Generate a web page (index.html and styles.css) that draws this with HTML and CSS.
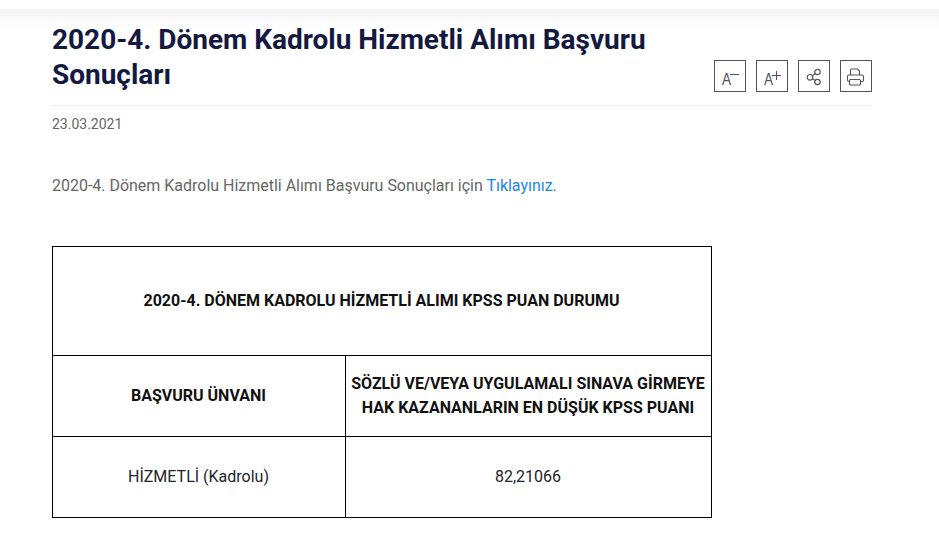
FILE: index.html
```html
<!DOCTYPE html>
<html lang="tr">
<head>
<meta charset="utf-8">
<title>2020-4. Dönem Kadrolu Hizmetli Alımı Başvuru Sonuçları</title>
<link rel="stylesheet" href="styles.css">
</head>
<body>
<div class="topbar"></div>
<main class="content">
  <header class="head">
    <h1 class="title">2020-4. Dönem Kadrolu Hizmetli Alımı Başvuru Sonuçları</h1>
    <div class="tools">
      <button class="tool" aria-label="Yazıyı küçült"><span class="a">A</span><span class="minus"></span></button>
      <button class="tool" aria-label="Yazıyı büyüt"><span class="a">A</span><span class="plus"></span></button>
      <button class="tool" aria-label="Paylaş">
        <svg class="ico" width="18" height="18" viewBox="0 0 18 18" fill="none" stroke="#555" stroke-width="1.2"><circle cx="5" cy="9.300" r="2.800"/><circle cx="12.500" cy="4" r="2.700"/><circle cx="12.500" cy="14" r="2.700"/><path d="M7.400 7.700l2.900-2.100M7.400 10.800l2.900 1.800"/></svg>
      </button>
      <button class="tool" aria-label="Yazdır">
        <svg class="ico" width="18" height="18" viewBox="0 0 18 18" fill="none" stroke="#555" stroke-width="1.100"><path d="M3.500 7V2q0-1 1-1h6l2 2v4"/><path d="M2.500 13.500h-.5q-1.500 0-1.500-1.500V8.500Q.5 7 2 7h13q1.500 0 1.500 1.500V12q0 1.500-1.500 1.500h-1.500"/><rect x="2.500" y="11.500" width="11" height="5.500" rx="1"/></svg>
      </button>
    </div>
  </header>
  <div class="date">23.03.2021</div>
  <p class="lead">2020-4. Dönem Kadrolu Hizmetli Alımı Başvuru Sonuçları için <a href="#">Tıklayınız.</a></p>
  <table class="result">
    <colgroup><col class="c1"><col></colgroup>
    <tr class="r1"><th colspan="2">2020-4. DÖNEM KADROLU HİZMETLİ ALIMI KPSS PUAN DURUMU</th></tr>
    <tr class="r2"><th>BAŞVURU ÜNVANI</th><th>SÖZLÜ VE/VEYA UYGULAMALI SINAVA GİRMEYE HAK KAZANANLARIN EN DÜŞÜK KPSS PUANI</th></tr>
    <tr class="r3"><td>HİZMETLİ (Kadrolu)</td><td>82,21066</td></tr>
  </table>
</main>
</body>
</html>
```
FILE: styles.css
```css
* { box-sizing: border-box; }
html, body { margin: 0; padding: 0; }
body {
  background: #fff;
  font-family: Roboto, "Liberation Sans", sans-serif;
  height: 555px;
  overflow: hidden;
}
.topbar {
  height: 20px;
  margin-top: 9px;
  background: linear-gradient(#f5f5f5, #fff);
  margin-bottom: -9px;
}
.content { width: 820px; margin-left: 52px; }
.head {
  display: flex;
  align-items: flex-end;
  justify-content: space-between;
  border-bottom: 1px solid #eee;
  padding-bottom: 13px;
  height: 86px;
  margin-top: -1px;
}
.title {
  margin: 0;
  width: 640px;
  font-size: 28px;
  line-height: 35px;
  font-weight: 700;
  color: #14193f;
  letter-spacing: -0.02px;
}
.tools { display: flex; gap: 10px; }
.tool {
  width: 32px;
  height: 32px;
  padding: 0;
  border: 1px solid #555;
  background: #fff;
  display: flex;
  align-items: center;
  justify-content: center;
  position: relative;
}
.ico { margin-top: 2px; }
.a {
  position: absolute;
  left: 7px;
  top: 10px;
  font-size: 16px;
  font-weight: 400;
  line-height: 18px;
  color: #555;
  transform: scaleX(.85);
  transform-origin: left;
}
.minus, .plus { position: absolute; background: #555; }
.minus { left: 15px; top: 13px; width: 9px; height: 1px; }
.plus { left: 15px; top: 14px; width: 9px; height: 1px; background: #6a3d7a; }
.plus::after { content: ""; position: absolute; left: 4px; top: -4px; width: 1px; height: 9px; background: #6a3d7a; }
.date {
  margin-top: 10px;
  font-size: 14px;
  line-height: 16px;
  color: #666;
}
.lead {
  margin: 42px 0 0;
  font-size: 16px;
  line-height: 24px;
  color: #666;
  letter-spacing: -0.015px;
}
.lead a { color: #1a86f5; text-decoration: none; }
.result {
  margin-top: 48px;
  width: 660px;
  border-collapse: collapse;
  table-layout: fixed;
  font-size: 16px;
  line-height: 24px;
  color: #212529;
}
.result th, .result td {
  border: 1px solid #000;
  text-align: center;
  padding: 0 6px 0 5px;
}
.result th { font-weight: 700; color: #111; }
.result td { font-weight: 400; }
.c1 { width: 293px; }
.r1 { height: 109px; }
.r2 { height: 81px; }
.r3 { height: 81px; }
```
